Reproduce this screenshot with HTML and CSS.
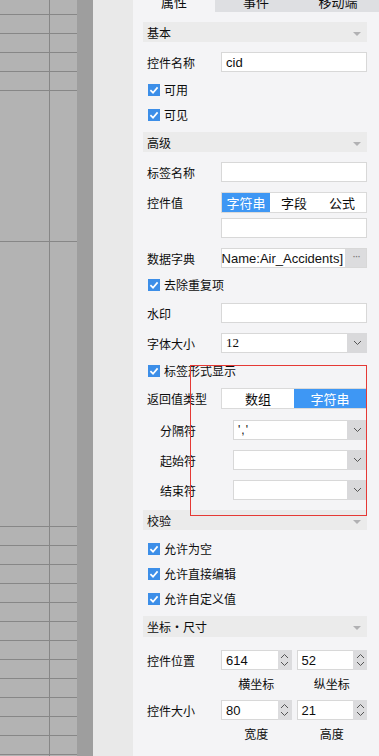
FILE: index.html
```html
<!DOCTYPE html>
<html lang="zh">
<head>
<meta charset="utf-8">
<link rel="stylesheet" href="styles.css">
</head>
<body>
<div class="grid">
  <div class="grow r15"><div class="ca"></div><div class="cb"></div></div>
  <div class="grow"><div class="ca"></div><div class="cb"></div></div>
  <div class="grow"><div class="ca"></div><div class="cb"></div></div>
  <div class="grow"><div class="ca"></div><div class="cb"></div></div>
  <div class="grow"><div class="ca"></div><div class="cb"></div></div>
  <div class="grow r151"><div class="ca"></div><div class="cb"></div></div>
  <div class="grow r285"><div class="ca"></div><div class="cb"></div></div>
  <div class="grow"><div class="ca"></div><div class="cb"></div></div>
  <div class="grow"><div class="ca"></div><div class="cb"></div></div>
  <div class="grow"><div class="ca"></div><div class="cb"></div></div>
  <div class="grow"><div class="ca"></div><div class="cb"></div></div>
  <div class="grow"><div class="ca"></div><div class="cb"></div></div>
  <div class="grow"><div class="ca"></div><div class="cb"></div></div>
  <div class="grow"><div class="ca"></div><div class="cb"></div></div>
  <div class="grow"><div class="ca"></div><div class="cb"></div></div>
  <div class="grow"><div class="ca"></div><div class="cb"></div></div>
  <div class="grow"><div class="ca"></div><div class="cb"></div></div>
  <div class="grow"><div class="ca"></div><div class="cb"></div></div>
  <div class="grow"><div class="ca"></div><div class="cb"></div></div>
  <div class="grow"><div class="ca"></div><div class="cb"></div></div>
</div>
<div class="strip"></div>
<div class="gutter"></div>
<div class="panel">
  <div class="tabs">
    <div class="tab active"><span>属性</span></div>
    <div class="tab"><span>事件</span></div>
    <div class="tab"><span>移动端</span></div>
  </div>
  <div class="body">
    <div class="header mt10"><span>基本</span><i class="tri"></i></div>
    <div class="row mt10"><span class="label">控件名称</span><div class="input"><span class="val">cid</span></div></div>
    <div class="check mt5"><span class="box"><svg width="12" height="12" viewBox="0 0 12 12"><path d="M2.4 6.2 L5 8.7 L9.6 3.4" fill="none" stroke="#fff" stroke-width="1.7"/></svg></span><span>可用</span></div>
    <div class="check"><span class="box"><svg width="12" height="12" viewBox="0 0 12 12"><path d="M2.4 6.2 L5 8.7 L9.6 3.4" fill="none" stroke="#fff" stroke-width="1.7"/></svg></span><span>可见</span></div>

    <div class="header mt5"><span>高级</span><i class="tri"></i></div>
    <div class="row mt10"><span class="label">标签名称</span><div class="input"></div></div>
    <div class="row-top mt10">
      <span class="label">控件值</span>
      <div class="stack">
        <div class="seg"><span class="on">字符串</span><span>字段</span><span>公式</span></div>
        <div class="input fixed mt5"></div>
      </div>
    </div>
    <div class="row mt10"><span class="label">数据字典</span><div class="input dict"><div class="dict-clip"><span class="dict-text">${TableName:Air_Accidents]</span></div><span class="more">···</span></div></div>
    <div class="check mt4"><span class="box"><svg width="12" height="12" viewBox="0 0 12 12"><path d="M2.4 6.2 L5 8.7 L9.6 3.4" fill="none" stroke="#fff" stroke-width="1.7"/></svg></span><span>去除重复项</span></div>
    <div class="row mt6"><span class="label">水印</span><div class="input"></div></div>
    <div class="row mt10"><span class="label">字体大小</span><div class="input select"><span class="val serif">12</span><span class="drop"><svg width="9" height="6" viewBox="0 0 9 6"><path d="M1 1 L4.5 4.5 L8 1" fill="none" stroke="#555" stroke-width="1"/></svg></span></div></div>
    <div class="check mt5"><span class="box"><svg width="12" height="12" viewBox="0 0 12 12"><path d="M2.4 6.2 L5 8.7 L9.6 3.4" fill="none" stroke="#fff" stroke-width="1.7"/></svg></span><span>标签形式显示</span></div>
    <div class="row mt5 h21"><span class="label">返回值类型</span><div class="seg two"><span>数组</span><span class="on">字符串</span></div></div>
    <div class="row sub mt11"><span class="label">分隔符</span><div class="input select"><span class="val quote">','</span><span class="drop"><svg width="9" height="6" viewBox="0 0 9 6"><path d="M1 1 L4.5 4.5 L8 1" fill="none" stroke="#555" stroke-width="1"/></svg></span></div></div>
    <div class="row sub mt10"><span class="label">起始符</span><div class="input select"><span class="val"></span><span class="drop"><svg width="9" height="6" viewBox="0 0 9 6"><path d="M1 1 L4.5 4.5 L8 1" fill="none" stroke="#555" stroke-width="1"/></svg></span></div></div>
    <div class="row sub mt10"><span class="label">结束符</span><div class="input select"><span class="val"></span><span class="drop"><svg width="9" height="6" viewBox="0 0 9 6"><path d="M1 1 L4.5 4.5 L8 1" fill="none" stroke="#555" stroke-width="1"/></svg></span></div></div>

    <div class="header mt10"><span>校验</span><i class="tri"></i></div>
    <div class="check mt6"><span class="box"><svg width="12" height="12" viewBox="0 0 12 12"><path d="M2.4 6.2 L5 8.7 L9.6 3.4" fill="none" stroke="#fff" stroke-width="1.7"/></svg></span><span>允许为空</span></div>
    <div class="check"><span class="box"><svg width="12" height="12" viewBox="0 0 12 12"><path d="M2.4 6.2 L5 8.7 L9.6 3.4" fill="none" stroke="#fff" stroke-width="1.7"/></svg></span><span>允许直接编辑</span></div>
    <div class="check"><span class="box"><svg width="12" height="12" viewBox="0 0 12 12"><path d="M2.4 6.2 L5 8.7 L9.6 3.4" fill="none" stroke="#fff" stroke-width="1.7"/></svg></span><span>允许自定义值</span></div>

    <div class="header mt5 h21"><span>坐标・尺寸</span><i class="tri"></i></div>
    <div class="row mt12"><span class="label">控件位置</span>
      <div class="pair">
        <div class="num"><span class="val">614</span><span class="spin"><svg width="9" height="6" viewBox="0 0 9 6"><path d="M1 5 L4.5 1.5 L8 5" fill="none" stroke="#555" stroke-width="1"/></svg><svg width="9" height="6" viewBox="0 0 9 6"><path d="M1 1 L4.5 4.5 L8 1" fill="none" stroke="#555" stroke-width="1"/></svg></span></div>
        <div class="num"><span class="val">52</span><span class="spin"><svg width="9" height="6" viewBox="0 0 9 6"><path d="M1 5 L4.5 1.5 L8 5" fill="none" stroke="#555" stroke-width="1"/></svg><svg width="9" height="6" viewBox="0 0 9 6"><path d="M1 1 L4.5 4.5 L8 1" fill="none" stroke="#555" stroke-width="1"/></svg></span></div>
      </div>
    </div>
    <div class="caps mt6"><span>横坐标</span><span>纵坐标</span></div>
    <div class="row mt8"><span class="label">控件大小</span>
      <div class="pair">
        <div class="num"><span class="val">80</span><span class="spin"><svg width="9" height="6" viewBox="0 0 9 6"><path d="M1 5 L4.5 1.5 L8 5" fill="none" stroke="#555" stroke-width="1"/></svg><svg width="9" height="6" viewBox="0 0 9 6"><path d="M1 1 L4.5 4.5 L8 1" fill="none" stroke="#555" stroke-width="1"/></svg></span></div>
        <div class="num"><span class="val">21</span><span class="spin"><svg width="9" height="6" viewBox="0 0 9 6"><path d="M1 5 L4.5 1.5 L8 5" fill="none" stroke="#555" stroke-width="1"/></svg><svg width="9" height="6" viewBox="0 0 9 6"><path d="M1 1 L4.5 4.5 L8 1" fill="none" stroke="#555" stroke-width="1"/></svg></span></div>
      </div>
    </div>
    <div class="caps mt6"><span>宽度</span><span>高度</span></div>
  </div>
</div>
<div class="redbox"></div>
</body>
</html>
```
FILE: styles.css
```css
html, body {
  margin: 0;
  padding: 0;
}
body {
  width: 379px;
  height: 756px;
  overflow: hidden;
  display: flex;
  font-family: "Noto Sans CJK SC", "Noto Sans", sans-serif;
  font-size: 12px;
  color: #0d0d0d;
  position: relative;
}
.grid {
  width: 77px;
  flex: 0 0 77px;
  background: #b3b3b3;
  display: flex;
  flex-direction: column;
}
.grow {
  height: 19px;
  flex: 0 0 auto;
  box-sizing: border-box;
  border-bottom: 1px solid #878787;
  display: flex;
}
.grow.r15 { height: 15px; }
.grow.r151 { height: 151px; }
.grow.r285 { height: 285px; }
.ca {
  width: 50px;
  box-sizing: border-box;
  border-right: 1px solid #878787;
}
.cb { flex: 1; }
.strip {
  flex: 0 0 16px;
  background: #9e9e9e;
}
.gutter {
  flex: 0 0 40px;
  background: #e9e9e9;
}
.panel {
  flex: 1;
  background: #f4f4f6;
  display: flex;
  flex-direction: column;
  min-width: 0;
}
.tabs {
  height: 12px;
  overflow: hidden;
  display: flex;
  flex: 0 0 12px;
}
.tab {
  flex: 0 0 82px;
  height: 12px;
  background: #dedfe2;
  text-align: center;
  overflow: hidden;
}
.tab.active { background: #f4f4f6; }
.tab span {
  display: block;
  line-height: 16px;
  margin-top: -6px;
  font-size: 13px;
}
.body {
  padding: 0 12px 0 10px;
  display: flex;
  flex-direction: column;
}
.mt4 { margin-top: 4px; }
.mt5 { margin-top: 5px; }
.mt6 { margin-top: 6px; }
.mt8 { margin-top: 8px; }
.mt10 { margin-top: 10px; }
.mt11 { margin-top: 11px; }
.mt12 { margin-top: 13px; }
.header {
  height: 20px;
  background: #ebebeb;
  display: flex;
  align-items: center;
  justify-content: space-between;
  padding: 0 6px 0 4px;
  font-size: 12px;
}
.header.h21 { height: 21px; }
.tri {
  width: 0;
  height: 0;
  border-left: 4px solid transparent;
  border-right: 4px solid transparent;
  border-top: 4px solid #b1b1b3;
  margin-top: 3px;
}
.row {
  height: 20px;
  display: flex;
  align-items: center;
  padding-left: 4px;
}
.row.h21 { height: 21px; }
.row.sub { padding-left: 17px; }
.row-top {
  display: flex;
  padding-left: 4px;
}
.row-top .label { line-height: 21px; }
.label {
  flex: 0 0 74px;
  white-space: nowrap;
}
.row.sub .label { flex-basis: 73px; }
.stack {
  flex: 1;
  display: flex;
  flex-direction: column;
}
.input {
  flex: 1;
  height: 20px;
  box-sizing: border-box;
  border: 1px solid #d8d8d8;
  background: #fff;
  display: flex;
  align-items: center;
  min-width: 0;
}
.input.fixed { flex: 0 0 20px; }
.val {
  padding-left: 4px;
  font-family: "Liberation Sans", "Noto Sans CJK SC", sans-serif;
  font-size: 13px;
  flex: 1;
  white-space: nowrap;
}
.val.serif {
  font-family: "Liberation Serif", serif;
  font-size: 13px;
}
.val.quote { font-size: 12px; letter-spacing: 1px; }
.select .drop {
  flex: 0 0 20px;
  height: 20px;
  margin: -1px -1px -1px 0;
  background: #d9d9db;
  display: flex;
  align-items: center;
  justify-content: center;
}
.dict { overflow: hidden; }
.dict-clip {
  flex: 1;
  min-width: 0;
  overflow: hidden;
  display: flex;
  justify-content: flex-end;
  padding-right: 2px;
}
.dict-text {
  flex: 0 0 auto;
  white-space: nowrap;
  font-family: "Liberation Sans", sans-serif;
  font-size: 13px;
  color: #111;
}
.more {
  flex: 0 0 22px;
  height: 20px;
  margin: -1px -1px -1px 0;
  background: #dcdcde;
  color: #777;
  text-align: center;
  line-height: 18px;
  font-size: 11px;
  font-family: "DejaVu Sans", sans-serif;
  letter-spacing: -1px;
}
.check {
  height: 25px;
  display: flex;
  align-items: center;
  padding-left: 5px;
  gap: 4px;
}
.box {
  width: 12px;
  height: 12px;
  background: #3c8ee8;
  display: flex;
}
.seg {
  height: 21px;
  box-sizing: border-box;
  border: 1px solid #dadada;
  background: #fff;
  display: flex;
  flex: 1;
}
.seg span {
  flex: 1;
  text-align: center;
  line-height: 19px;
  font-size: 13px;
}
.seg span.on {
  background: #3e97f4;
  color: #fff;
}
.pair {
  flex: 1;
  display: flex;
  gap: 5px;
}
.num {
  flex: 1;
  height: 20px;
  box-sizing: border-box;
  border: 1px solid #d8d8d8;
  background: #fff;
  display: flex;
  align-items: center;
}
.spin {
  flex: 0 0 14px;
  height: 20px;
  margin: -1px -1px -1px 0;
  background: #dcdcde;
  display: flex;
  flex-direction: column;
  align-items: center;
  justify-content: center;
  gap: 2px;
}
.caps {
  height: 16px;
  display: flex;
  padding-left: 78px;
  gap: 5px;
  line-height: 16px;
  font-size: 12px;
}
.caps span {
  flex: 1;
  text-align: center;
}
.redbox {
  position: absolute;
  left: 190px;
  top: 365px;
  width: 175px;
  height: 149px;
  border: 1px solid #e53935;
  pointer-events: none;
}
```
